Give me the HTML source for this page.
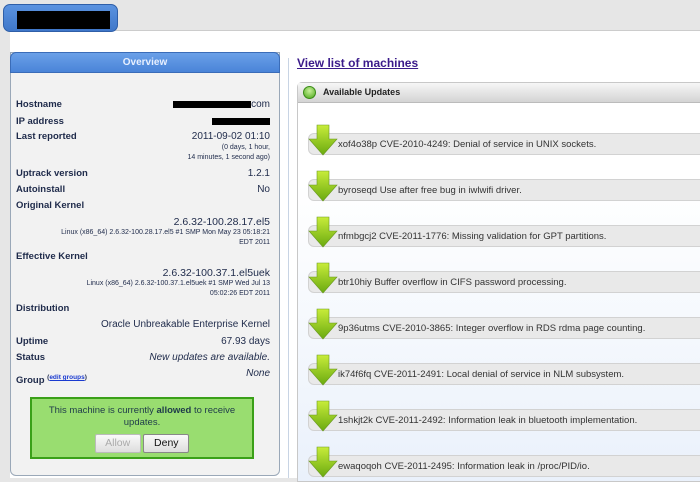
<!DOCTYPE html>
<html><head><style>
*{margin:0;padding:0;box-sizing:border-box}
body{width:700px;height:478px;overflow:hidden;background:#e6e6e6;font-family:"Liberation Sans",sans-serif;position:relative}
.page{position:absolute;left:10px;top:30px;right:0;bottom:0;background:#fff;border-top:1px solid #ccc}
.tab{position:absolute;left:3px;top:4px;width:115px;height:28px;background:linear-gradient(#5b93e0,#3f77c9);border:1px solid #2f5fa8;border-radius:7px;}
.tab div{position:absolute;left:13px;top:6px;width:93px;height:18px;background:#000}
.left{position:absolute;left:10px;top:52px;width:270px;height:424px;background:#f2f2f2;border:1px solid #9aa8b8;border-radius:0 0 6px 6px}
.lh{position:absolute;left:10px;top:52px;width:270px;height:21px;background:linear-gradient(#6aa0e8,#4a84d8);border:1px solid #3a6cb8;border-radius:6px 6px 0 0;color:#e8f0ff;font-size:10px;font-weight:bold;text-align:center;line-height:20px}
.r{position:absolute;left:16px;width:254px;font-size:9.5px;color:#1e2a4a;line-height:12px}
.r b{position:absolute;left:0;top:0}
.r span{position:absolute;right:0;top:0;text-align:right;font-size:10px}
.r span .sm{display:block;position:static;font-size:7px;line-height:10px}
.vl{position:absolute;left:288px;top:58px;width:1px;height:420px;background:#c8d4e4}
.link{position:absolute;left:297px;top:56px;font-size:12px;font-weight:bold;color:#3a1a8a;text-decoration:underline}
.box{position:absolute;left:297px;top:82px;width:410px;height:400px;border:1px solid #c8c8c8;border-radius:5px 0 0 0;background:linear-gradient(#fff 25%,#eaf1fb)}
.bh{height:20px;background:linear-gradient(#f6f6f6,#d4d4d4);border-bottom:1px solid #bbb;font-size:9px;font-weight:bold;color:#222;line-height:19px;padding-left:25px;position:relative}
.dot{position:absolute;left:5px;top:3px;width:13px;height:13px;border-radius:50%;background:radial-gradient(circle at 50% 35%,#c8f09a,#4aa818);border:1px solid #3a8a18}
.row{position:absolute;left:0;width:410px;height:46px}
.bar{position:absolute;left:10px;top:30px;width:400px;height:22px;background:#e9e9e9;border:1px solid #d2d2d2;border-radius:6px 0 0 6px;font-size:9.5px;color:#333;line-height:21px;padding-left:29px}
.arr{position:absolute;left:10px;top:21px}
.gbox{position:absolute;left:30px;top:397px;width:224px;height:62px;background:#99dd70;border:2px solid #3aa018;text-align:center;font-size:9.5px;color:#1e3a4a;padding-top:6px;line-height:12px}
.btn{display:inline-block;margin-top:5px;height:19px;width:46px;border:1px solid #888;border-radius:2px;background:linear-gradient(#fafafa,#ddd);font-size:10.5px;line-height:17px;color:#111}
</style></head><body>
<div class="page"></div>
<div class="tab"><div></div></div>
<div class="left"></div>
<div class="lh">Overview</div>
<div class="r" style="top:99px"><b>Hostname</b><span><i style="display:inline-block;width:78px;height:7px;background:#000;vertical-align:middle"></i>com</span></div>
<div class="r" style="top:116px"><b>IP address</b><span><i style="display:inline-block;width:58px;height:7px;background:#000;vertical-align:middle"></i></span></div>
<div class="r" style="top:131px"><b>Last reported</b><span>2011-09-02 01:10<span class="sm">(0 days, 1 hour,<br>14 minutes, 1 second ago)</span></span></div>
<div class="r" style="top:168px"><b>Uptrack version</b><span>1.2.1</span></div>
<div class="r" style="top:184px"><b>Autoinstall</b><span>No</span></div>
<div class="r" style="top:200px"><b>Original Kernel</b></div>
<div class="r" style="top:216px"><span style="font-size:10.5px">2.6.32-100.28.17.el5<span class="sm">Linux (x86_64) 2.6.32-100.28.17.el5 #1 SMP Mon May 23 05:18:21<br>EDT 2011</span></span></div>
<div class="r" style="top:251px"><b>Effective Kernel</b></div>
<div class="r" style="top:267px"><span style="font-size:10.5px">2.6.32-100.37.1.el5uek<span class="sm">Linux (x86_64) 2.6.32-100.37.1.el5uek #1 SMP Wed Jul 13<br>05:02:26 EDT 2011</span></span></div>
<div class="r" style="top:303px"><b>Distribution</b></div>
<div class="r" style="top:319px"><span>Oracle Unbreakable Enterprise Kernel</span></div>
<div class="r" style="top:336px"><b>Uptime</b><span>67.93 days</span></div>
<div class="r" style="top:352px"><b>Status</b><span><i>New updates are available.</i></span></div>
<div class="r" style="top:368px"><b style="top:4px">Group <sup style="font-size:6.5px">(<u style="color:#1a3ad0">edit groups</u>)</sup></b><span><i>None</i></span></div>
<div class="gbox">This machine is currently <b>allowed</b> to receive<br>updates.<br><span class="btn" style="color:#aaa;border-color:#bbb;width:46px">Allow</span> <span class="btn">Deny</span></div>
<div class="vl"></div>
<div class="link">View list of machines</div>
<div class="box"><div class="bh"><div class="dot"></div>Available Updates</div>
<div id="rows"></div></div>
<script>
var t=["xof4o38p CVE-2010-4249: Denial of service in UNIX sockets.","byroseqd Use after free bug in iwlwifi driver.","nfmbgcj2 CVE-2011-1776: Missing validation for GPT partitions.","btr10hiy Buffer overflow in CIFS password processing.","9p36utms CVE-2010-3865: Integer overflow in RDS rdma page counting.","ik74f6fq CVE-2011-2491: Local denial of service in NLM subsystem.","1shkjt2k CVE-2011-2492: Information leak in bluetooth implementation.","ewaqoqoh CVE-2011-2495: Information leak in /proc/PID/io."];
var h="";
for(var i=0;i<t.length;i++){h+='<div class="row" style="top:'+(20+i*46)+'px"><div class="bar">'+t[i]+'</div><svg class="arr" width="30" height="32" viewBox="0 0 30 32"><defs><linearGradient id="g'+i+'" x1="0" y1="0" x2="0" y2="1"><stop offset="0" stop-color="#c8ec3a"/><stop offset="1" stop-color="#6aaa10"/></linearGradient></defs><path d="M9 1H21V15H29L15 31L1 15H9Z" fill="url(#g'+i+')" stroke="#6a9a20" stroke-width="0.6"/></svg></div>';}
document.getElementById("rows").innerHTML=h;
</script>
</body></html>
